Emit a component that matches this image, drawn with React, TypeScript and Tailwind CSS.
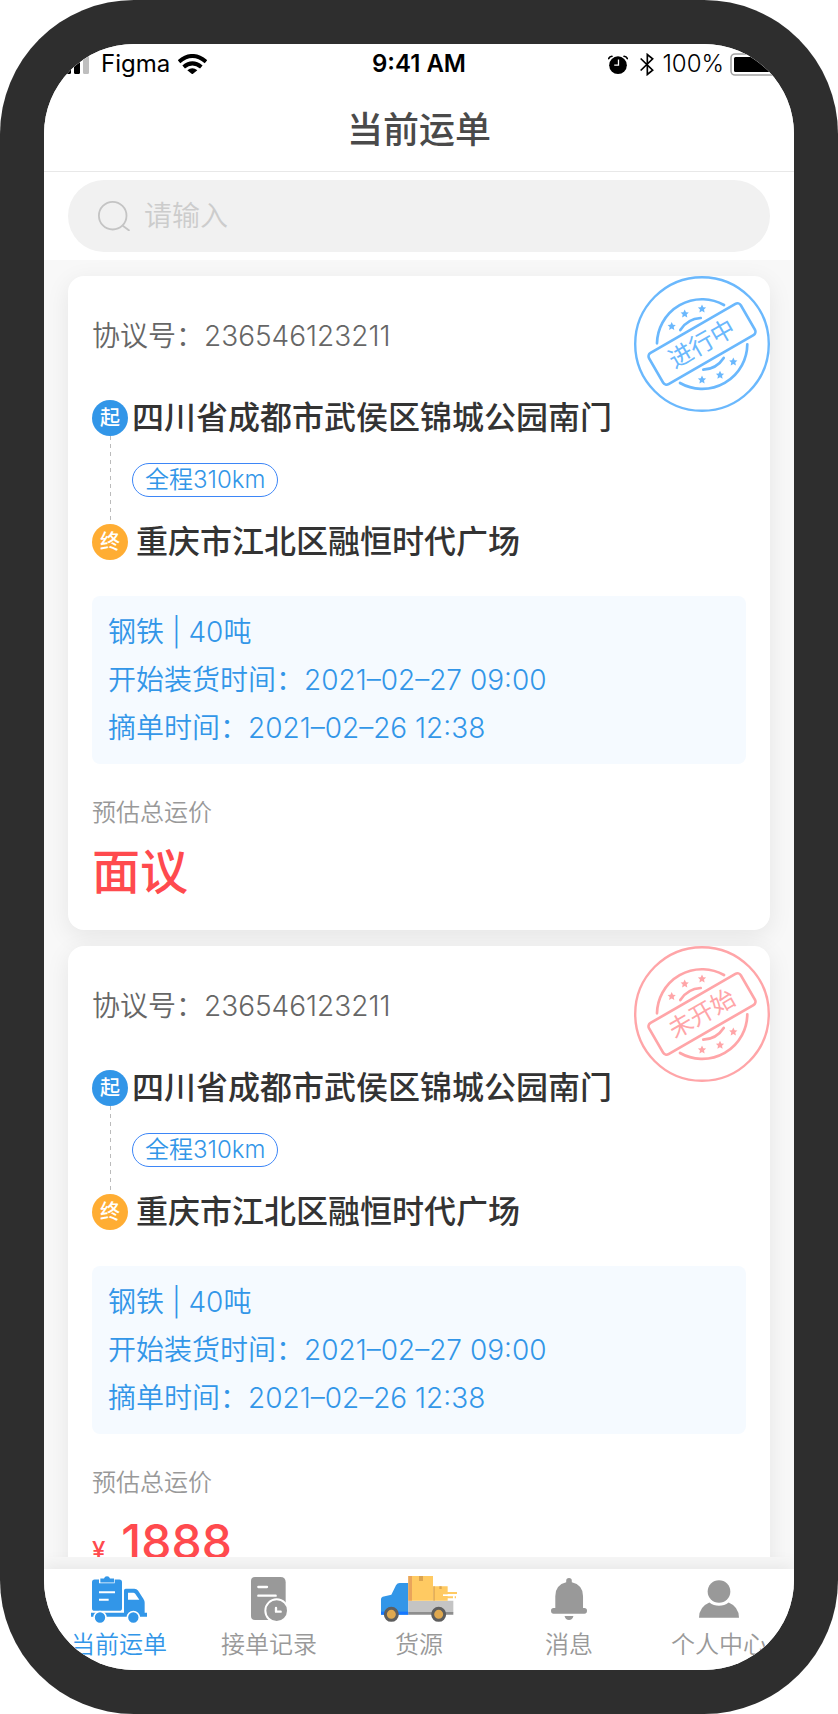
import React from "react";

const STAR = "M0 -4.2L1.3 -1.5L4.1 -1.2L2 0.8L2.6 3.7L0 2.2L-2.6 3.7L-2 0.8L-4.1 -1.2L-1.3 -1.5Z";
const STARS = [
  [37.7, 50.3],
  [50.7, 37.7],
  [68, 32.7],
  [68, 103.7],
  [86, 99],
  [99.3, 85.7],
];

function Stamp({ text, color }: { text: string; color: string }) {
  return (
    <svg viewBox="0 0 136 136" className="absolute right-0 top-0 size-[136px]" fill="none" stroke={color} strokeWidth="2.7" strokeLinecap="round">
      <circle cx="68" cy="68" r="66.800" strokeWidth="2.400" />
      <path d="M23 67.3A45 45 0 0 1 90 29M113.3 68.3A45 45 0 0 1 46 107" />
      <path d="M46.3 54A26 26 0 0 1 66.7 42M69.3 93.7A26 26 0 0 0 89.7 82" />
      <rect x="15" y="50" width="106" height="36" rx="4" transform="rotate(-30 68 68)" />
      {STARS.map(([x, y]) => (
        <path key={`${x}-${y}`} d={STAR} transform={`translate(${x} ${y})`} fill={color} stroke="none" />
      ))}
      <text x="68" y="76" textAnchor="middle" fontSize="24" fill={color} stroke="none" transform="rotate(-30 68 68)">
        {text}
      </text>
    </svg>
  );
}

type Order = {
  id: number;
  code: string;
  status: string;
  color: string;
  price: React.ReactNode;
};

const ORDERS: Order[] = [
  { id: 1, code: "236546123211", status: "进行中", color: "#6ab8fd", price: "面议" },
  {
    id: 2,
    code: "236546123211",
    status: "未开始",
    color: "#ffa5a8",
    price: (
      <>
        <span className="mr-4 text-2xl">¥</span>1888
      </>
    ),
  },
];

function OrderCard({ order }: { order: Order }) {
  return (
    <article className="relative shrink-0 rounded-2xl bg-white px-6 pt-10 pb-[25px] shadow-[0_6px_24px_rgba(0,0,0,0.08)]">
      <Stamp text={order.status} color={order.color} />
      <p className="text-[28px] leading-10 font-[350] text-[#666]">协议号：{order.code}</p>
      <div className="mt-10 flex items-center gap-1">
        <span className="flex size-9 shrink-0 items-center justify-center rounded-full bg-[#3296e8] text-xl font-medium text-white">起</span>
        <h2 className="text-[32px] leading-[44px] font-medium text-[#333]">四川省成都市武侯区锦城公园南门</h2>
      </div>
      <div className="flex h-20 items-center">
        <svg className="ml-[18px] h-[88px] w-px shrink-0 overflow-visible" viewBox="0 0 1 88" stroke="#bbb">
          <path d="M0.5 0V88" strokeDasharray="4 4" />
        </svg>
        <span className="ml-[21px] flex h-[34px] items-center rounded-full border border-[#3d86f7] px-3 text-2xl font-[350] text-[#3296e8]">
          全程310km
        </span>
      </div>
      <div className="flex items-center gap-2">
        <span className="flex size-9 shrink-0 items-center justify-center rounded-full bg-[#ffad33] text-xl font-medium text-white">终</span>
        <h2 className="text-[32px] leading-[44px] font-medium text-[#333]">重庆市江北区融恒时代广场</h2>
      </div>
      <div className="mt-8 rounded-lg bg-[#f5faff] px-4 py-3 text-[28px] leading-[48px] font-[350] text-[#3296e8]">
        <p>钢铁 | 40吨</p>
        <p>开始装货时间：2021–02–27 09:00</p>
        <p>摘单时间：2021–02–26 12:38</p>
      </div>
      <p className="mt-8 text-2xl leading-[34px] font-[350] text-[#999]">预估总运价</p>
      <p className="h-[75px] text-5xl leading-[84px] font-medium text-[#ff4a4e]">{order.price}</p>
    </article>
  );
}

function CurrentIcon() {
  return (
    <svg viewBox="270 226 168 140" className="h-[47px] w-14" fill="#3296e8">
      <path d="M281 236H294V247H341V236H355Q363 236 363 244V322Q363 330 355 330H281Q273 330 273 322V244Q273 236 281 236Z" />
      <path d="M298 233H309Q311 226 318 226Q325 226 327 233H339V245H298Z" />
      <path d="M294 274H342M294 297H323" stroke="#fff" strokeWidth="6" />
      <path d="M270 336H369V269Q369 264 374 264H400Q407 264 411 269L427 294Q431 300 431 306V336H438V348H270ZM381 276V297H415L402 278Q400 276 397 276Z" fillRule="evenodd" />
      <circle cx="297" cy="350" r="18" stroke="#fff" strokeWidth="5" />
      <circle cx="397" cy="350" r="18" stroke="#fff" strokeWidth="5" />
    </svg>
  );
}

function RecordIcon() {
  return (
    <svg viewBox="750 231 108 132" className="h-11 w-9" fill="#999">
      <path d="M762 231H838Q854 231 854 247V360H762Q750 360 750 348V243Q750 231 762 231Z" />
      <path d="M820 360H858V330H820Z" fill="#fff" />
      <path d="M772 261H798M772 287H824" stroke="#fff" strokeWidth="7" strokeLinecap="round" />
      <circle cx="827" cy="332" r="34" stroke="#fff" strokeWidth="6" />
      <path d="M825 324V335H839" fill="none" stroke="#fff" strokeWidth="7" strokeLinecap="round" strokeLinejoin="round" />
    </svg>
  );
}

function CargoIcon() {
  return (
    <svg viewBox="60 51 228 138" className="h-[46px] w-[76px]">
      <path d="M142 72V167H60V120Q60 115 65 113L91 107L105 79Q109 72 116 72Z" fill="#3296e8" />
      <path d="M60 158H142V167H60Z" fill="#1677ff" />
      <path d="M142 125H277V160H142Z" fill="#c4c4c4" />
      <path d="M142 159H277V167H142Z" fill="#8e8e8e" />
      <path d="M142 51H216V125H142ZM217 82H260V125H217Z" fill="#ffca62" />
      <path d="M142 51H153V125H142Z" fill="#e9a45b" />
      <path d="M174 51H186V66H174ZM217 82H221V125H217ZM235 82H242V90H235Z" fill="#dba44f" />
      <path d="M246 102H288M246 115H276M281 115H285" stroke="#ffca62" strokeWidth="6" />
      <path d="M246 108.500H284" stroke="#fff" strokeWidth="5" />
      <circle cx="91" cy="166" r="18" fill="#dfa84f" stroke="#5e5e5e" strokeWidth="9" />
      <circle cx="233" cy="166" r="18" fill="#dfa84f" stroke="#5e5e5e" strokeWidth="9" />
    </svg>
  );
}

function BellIcon() {
  return (
    <svg viewBox="394 231 109 127" className="h-[42px] w-9" fill="#999">
      <path d="M440 239Q440 231 448.500 231Q457 231 457 239V244Q491 252 491 286V322H495Q503 322 503 330Q503 339 495 339H402Q394 339 394 330Q394 322 402 322H407V286Q407 252 440 244Z" />
      <path d="M435 346H462Q459 358 448.500 358Q438 358 435 346Z" />
    </svg>
  );
}

function UserIcon() {
  return (
    <svg viewBox="840 243 120 113" className="h-[38px] w-10" fill="#999">
      <circle cx="900" cy="277" r="34" />
      <path d="M840 356Q840 323 871 310Q884 320 900 320Q916 320 929 310Q960 323 960 356Z" />
    </svg>
  );
}

const TABS = [
  { label: "当前运单", icon: <CurrentIcon />, active: true },
  { label: "接单记录", icon: <RecordIcon />, active: false },
  { label: "货源", icon: <CargoIcon />, active: false },
  { label: "消息", icon: <BellIcon />, active: false },
  { label: "个人中心", icon: <UserIcon />, active: false },
];

function StatusBar() {
  return (
    <div className="grid h-10 grid-cols-[1fr_auto_1fr] items-center px-3 text-2xl text-black">
      <div className="flex items-center">
        <svg viewBox="0 0 33 20" className="h-5 w-[33px]">
          <rect x="0" y="12" width="6" height="8" rx="1.500" />
          <rect x="9" y="8" width="6" height="12" rx="1.500" />
          <rect x="18" y="4" width="6" height="16" rx="1.500" />
          <rect x="27" y="0" width="6" height="20" rx="1.500" fill="#bfbfbf" />
        </svg>
        <span className="ml-3">Figma</span>
        <svg viewBox="534 161 87 60" className="ml-2 h-5 w-[29px]">
          <path d="M537 184Q577 150 618 184M551 200Q577 178 604 200" fill="none" stroke="#000" strokeWidth="12" />
          <path d="M562 210Q577 198 592 210L577 222Z" />
        </svg>
      </div>
      <span className="font-semibold">9:41 AM</span>
      <div className="flex items-center justify-end">
        <svg viewBox="563 163 61 58" className="h-[19px] w-5">
          <circle cx="593.500" cy="194" r="27" />
          <path d="M565 174Q568 168 575 167M622 174Q619 168 612 167" fill="none" stroke="#000" strokeWidth="5" strokeLinecap="round" />
          <path d="M595 177V194H582" fill="none" stroke="#fff" strokeWidth="4" />
        </svg>
        <svg viewBox="660 157 42 68" className="ml-3 h-[23px] w-3.5" fill="none" stroke="#000" strokeWidth="5">
          <path d="M662 173L698 208L682 221V161L698 174L662 209" />
        </svg>
        <span className="ml-2 font-[350]">100%</span>
        <svg viewBox="0 0 52 23" className="ml-1.5 h-[23px] w-[52px]">
          <rect x="1" y="1" width="46" height="21" rx="4" fill="none" stroke="#a3a3a3" strokeWidth="1.600" />
          <rect x="4" y="4" width="40" height="15" rx="1.500" />
          <path d="M49 8Q52 11.500 49 15Z" fill="#a3a3a3" />
        </svg>
      </div>
    </div>
  );
}

export default function App() {
  return (
    <div className="h-screen bg-white font-[Inter,'Noto_Sans_CJK_SC',sans-serif]">
      <div className="h-full rounded-[134px] bg-[#2e2e2e] p-11">
        <div className="flex h-full flex-col overflow-hidden rounded-[90px] bg-[#f8f8f8]">
          <header className="border-b border-[#e8e8e8] bg-white">
            <StatusBar />
            <h1 className="pt-6 pb-[19px] text-center text-4xl leading-[44px] font-medium text-[#4a4a4a]">当前运单</h1>
          </header>
          <div className="bg-white px-6 py-2">
            <label className="flex h-[72px] items-center gap-3.5 rounded-full bg-[#f1f1f1] px-[30px]">
              <svg viewBox="0 0 32 30" className="h-[30px] w-8 shrink-0" fill="none" stroke="#c4c4c4" strokeWidth="1.800">
                <circle cx="14.700" cy="14.700" r="13.800" />
                <path d="M24.500 24.500L31.500 29.800" />
              </svg>
              <input
                type="text"
                aria-label="搜索运单"
                placeholder="请输入"
                className="min-w-0 flex-1 bg-transparent text-[28px] font-[350] text-[#333] outline-none placeholder:text-[#ccc]"
              />
            </label>
          </div>
          <main className="relative z-10 flex min-h-0 flex-1 flex-col gap-4 overflow-y-auto px-6 pt-4 [scrollbar-width:none]">
            {ORDERS.map((order) => (
              <OrderCard key={order.id} order={order} />
            ))}
          </main>
          <nav className="mt-3 grid grid-cols-5 bg-white pt-1.5 pb-2 shadow-[0_-4px_16px_rgba(0,0,0,0.07)]">
            {TABS.map((tab) => (
              <a key={tab.label} href="#" className="flex flex-col items-center gap-1">
                <span className="flex h-12 items-center">{tab.icon}</span>
                <span className={tab.active ? "text-2xl leading-[35px] font-[350] whitespace-nowrap text-[#3296e8]" : "text-2xl leading-[35px] font-[350] whitespace-nowrap text-[#999]"}>
                  {tab.label}
                </span>
              </a>
            ))}
          </nav>
        </div>
      </div>
    </div>
  );
}
